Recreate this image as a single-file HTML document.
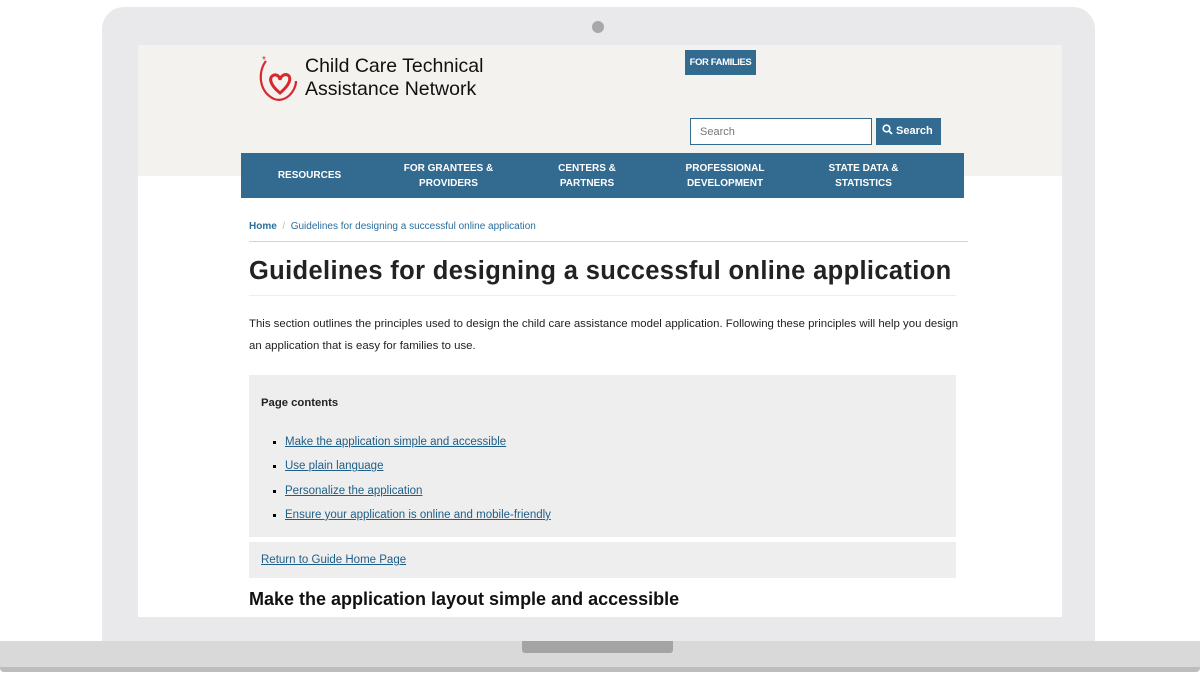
<!DOCTYPE html>
<html><head><meta charset="utf-8"><style>
*{margin:0;padding:0;box-sizing:border-box}
body{width:1200px;height:675px;background:#fff;position:relative;overflow:hidden;font-family:"Liberation Sans",sans-serif}
.bezel{position:absolute;left:102px;top:7px;width:993px;height:650px;background:#e9e9eb;border-radius:22px 22px 0 0}
.cam{position:absolute;left:592px;top:21px;width:12px;height:12px;border-radius:50%;background:#a8a8aa}
.screen{position:absolute;left:138px;top:45px;width:924px;height:572px;background:#fff;overflow:hidden}
.base{position:absolute;left:0;top:641px;width:1200px;height:26px;background:#d9d9d9}
.base2{position:absolute;left:0;top:667px;width:1200px;height:5px;background:#bdbdbd;border-radius:0 0 4px 4px}
.notch{position:absolute;left:522px;top:641px;width:151px;height:12px;background:#a4a4a4;border-radius:0 0 3px 3px}
.hdr{position:absolute;left:0;top:0;width:924px;height:131px;background:#f4f2ee}
.a{position:absolute}
.logo{left:167px;top:10px;font-size:19.5px;line-height:23px;color:#111}
.ff{left:547px;top:5px;width:71px;height:25px;background:#336a90;color:#fff;font-size:9.5px;font-weight:bold;text-align:center;line-height:25px;letter-spacing:-.4px}
.srch{left:552px;top:73px;width:182px;height:27px;border:1px solid #336a90;background:#fff;font-size:11px;color:#777;padding:7px 9px}
.sbtn{left:738px;top:73px;width:65px;height:27px;background:#336a90;color:#fff;font-size:11px;font-weight:bold;line-height:27px;padding-left:6px}
.nav{left:103px;top:108px;width:723px;height:45px;background:#336a90;color:#fff;font-size:10px;font-weight:bold;line-height:15px}
.nav div{position:absolute;text-align:center;top:8px}
.bc{left:111px;top:176px;font-size:10px;color:#2a6f9e}
.hr{left:111px;top:196px;width:719px;height:1px;background:#d8d2c8}
h1{position:absolute;left:111px;top:212px;font-size:25.5px;font-weight:bold;color:#222;letter-spacing:.35px}
.hr2{left:111px;top:250px;width:707px;height:1px;background:#eee}
.p{left:111px;top:268px;font-size:11.4px;line-height:22px;color:#222;width:760px;letter-spacing:0}
.box{left:111px;top:330px;width:707px;height:162px;background:#eee}
.box2{left:111px;top:497px;width:707px;height:36px;background:#eee}
a{color:#1f5f87;text-decoration:underline}
.pc{left:12px;top:22px;font-size:11.3px;font-weight:bold;color:#222}
ul{position:absolute;left:23px;top:55px;list-style:square;font-size:11.5px;line-height:24.3px;padding-left:13px}
li::marker{font-size:9px}
h2{position:absolute;left:111px;top:544px;font-size:18px;font-weight:bold;color:#111}
</style></head><body>
<div class="bezel"></div><div class="cam"></div>
<div class="screen">
<div class="hdr"></div>
<svg class="a" style="left:118px;top:8px" width="48" height="50" viewBox="0 0 48 50"><path d="M10 8 C2 18 2 38 18 46 C30 50 40 38 40 28" fill="none" stroke="#d7282f" stroke-width="2.2"/><path d="M24 40 C14 32 12 24 18 22 C22 21 24 25 24 27 C25 22 30 20 33 23 C36 28 30 35 24 40Z" fill="none" stroke="#d7282f" stroke-width="3"/><text x="6" y="10" font-size="10" fill="#d7282f">*</text></svg>
<div class="a logo">Child Care Technical<br>Assistance Network</div>
<div class="a ff">FOR FAMILIES</div>
<div class="a srch">Search</div>
<div class="a sbtn"><svg width="11" height="11" viewBox="0 0 11 11" style="vertical-align:-1px"><circle cx="4.5" cy="4.5" r="3.3" fill="none" stroke="#fff" stroke-width="1.6"/><path d="M7 7 L10 10" stroke="#fff" stroke-width="1.8"/></svg> Search</div>
<div class="a nav">
<div style="left:20px;width:97px;top:15px">RESOURCES</div>
<div style="left:150px;width:115px">FOR GRANTEES &amp;<br>PROVIDERS</div>
<div style="left:300px;width:92px">CENTERS &amp;<br>PARTNERS</div>
<div style="left:425px;width:118px">PROFESSIONAL<br>DEVELOPMENT</div>
<div style="left:570px;width:105px">STATE DATA &amp;<br>STATISTICS</div>
</div>
<div class="a bc"><b>Home</b> <span style="color:#bbb">&nbsp;/&nbsp;</span> Guidelines for designing a successful online application</div>
<div class="a hr"></div>
<h1>Guidelines for designing a successful online application</h1>
<div class="a hr2"></div>
<div class="a p">This section outlines the principles used to design the child care assistance model application. Following these principles will help you design<br>an application that is easy for families to use.</div>
<div class="a box"><div class="a pc">Page contents</div>
<ul><li><a>Make the application simple and accessible</a></li><li><a>Use plain language</a></li><li><a>Personalize the application</a></li><li><a>Ensure your application is online and mobile-friendly</a></li></ul></div>
<div class="a box2"><a class="a" style="left:12px;top:12px;font-size:11.5px">Return to Guide Home Page</a></div>
<h2>Make the application layout simple and accessible</h2>
</div>
<div class="base"></div><div class="base2"></div><div class="notch"></div>
</body></html>
